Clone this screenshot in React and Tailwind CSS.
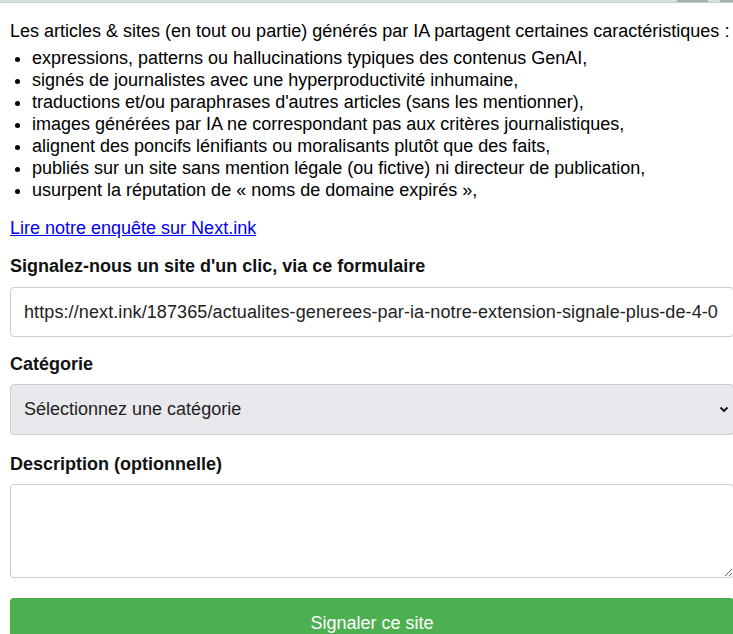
import React from "react";

const points = [
  "expressions, patterns ou hallucinations typiques des contenus GenAI,",
  "signés de journalistes avec une hyperproductivité inhumaine,",
  "traductions et/ou paraphrases d'autres articles (sans les mentionner),",
  "images générées par IA ne correspondant pas aux critères journalistiques,",
  "alignent des poncifs lénifiants ou moralisants plutôt que des faits,",
  "publiés sur un site sans mention légale (ou fictive) ni directeur de publication,",
  "usurpent la réputation de « noms de domaine expirés »,",
];

const App = () => {
  return (
    <div className="w-[733px] h-[634px] overflow-hidden bg-white text-black font-['Liberation_Sans',Arial,sans-serif] text-[18px]">
      {/* bande du haut */}
      <div className="h-[3px] bg-[#d8e2d8] border-b border-[#c5cec5] flex justify-end">
        <div className="w-[31px] h-[2px] bg-[#a9b2a9] mr-[12px]" />
        <div className="w-[13px] h-[2px] bg-[#a9b2a9]" />
      </div>

      <div className="w-[724px] ml-[10px] pt-[17px]">
        <p className="leading-[22px] whitespace-nowrap">
          Les articles &amp; sites (en tout ou partie) générés par IA partagent certaines caractéristiques :
        </p>
        <ul className="list-disc pl-[22px] mt-[5px] leading-[22px]">
          {points.map((p) => (
            <li key={p} className="whitespace-nowrap">{p}</li>
          ))}
        </ul>

        <a href="#" className="block mt-[16px] leading-[22px] text-[#0000ee] underline w-fit">
          Lire notre enquête sur Next.ink
        </a>

        {/* FORMULAIRE */}
        <form className="flex flex-col" onSubmit={(e) => e.preventDefault()}>
          <label className="mt-[16px] font-bold leading-[22px] text-[#111]">
            Signalez-nous un site d'un clic, via ce formulaire
          </label>
          <input
            type="text"
            defaultValue="https://next.ink/187365/actualites-generees-par-ia-notre-extension-signale-plus-de-4-0"
            className="mt-[10px] h-[50px] w-full px-[13px] border border-[#cccccc] rounded-[4px] text-[#222] tracking-[0.1px] outline-none"
          />

          <label className="mt-[16px] font-bold leading-[22px] text-[#111]">Catégorie</label>
          <div className="relative mt-[9px]">
            <select className="appearance-none w-full h-[51px] px-[13px] bg-[#e9e9ed] border border-[#cccccc] rounded-[4px] text-[#222] outline-none">
              <option>Sélectionnez une catégorie</option>
            </select>
            <svg className="absolute left-[709px] top-[22px] w-[10px] h-[7px] pointer-events-none" viewBox="0 0 10 7" fill="none">
              <path d="M1.5 1.5 L5 5 L8.5 1.5" stroke="#111" strokeWidth="1.8" />
            </svg>
          </div>

          <label className="mt-[18px] font-bold leading-[22px] text-[#111]">Description (optionnelle)</label>
          <textarea className="mt-[9px] h-[94px] w-full px-[13px] py-[10px] border border-[#cccccc] rounded-[4px] outline-none" />

          <button type="submit" className="mt-[20px] w-full py-[15px] leading-[20px] bg-[#4caf50] text-white rounded-[4px]">
            Signaler ce site
          </button>
        </form>
      </div>
    </div>
  );
};

export default App;
